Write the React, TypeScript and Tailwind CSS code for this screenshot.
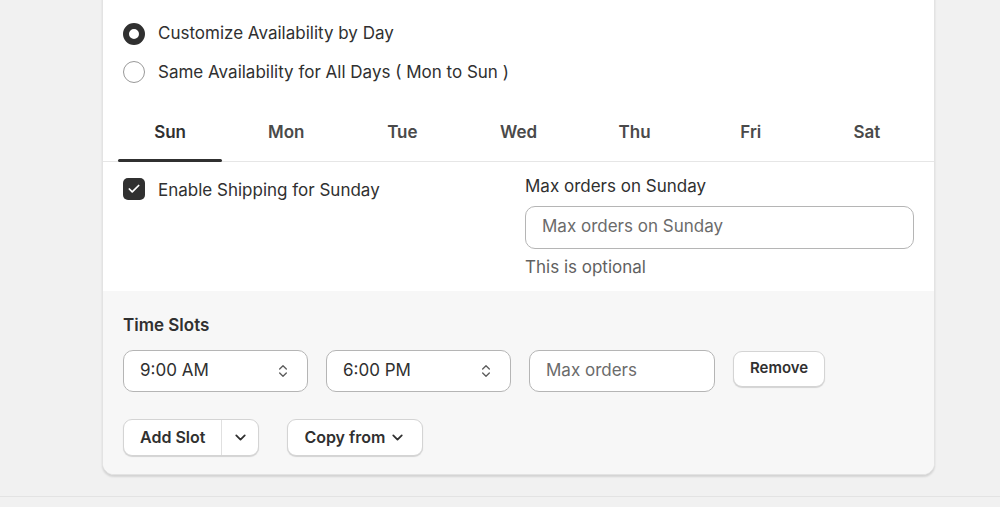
import { ChevronDown, ChevronsUpDown, Check } from "lucide-react";

const days = ["Sun", "Mon", "Tue", "Wed", "Thu", "Fri", "Sat"];

function Select({ value }: { value: string }) {
  return (
    <div className="flex items-center justify-between w-[185px] h-[42px] px-4 bg-white border border-[#b5b5b5] rounded-[10px]">
      <span>{value}</span>
      <ChevronsUpDown size={16} className="text-[#5c5c5c]" />
    </div>
  );
}

export default function App() {
  return (
    <div
      className="w-[1000px] h-[507px] bg-[#f1f1f1] overflow-hidden text-[17px] text-[#303030]"
      style={{ fontFamily: "Inter, 'Liberation Sans', sans-serif" }}
    >
      <div className="ml-[102px] w-[833px] -mt-[20px] bg-white rounded-b-[12px] border border-[#e3e3e3] shadow-[0_2px_2px_rgba(0,0,0,0.12)] overflow-hidden">
        <div className="px-5 pt-[40px] flex flex-col gap-[13px]">
          <label className="flex items-center gap-[13px]">
            <span className="w-[22px] h-[22px] rounded-full border-[6px] border-[#303030]" />
            Customize Availability by Day
          </label>
          <label className="flex items-center gap-[13px]">
            <span className="w-[22px] h-[22px] rounded-full border border-[#999]" />
            Same Availability for All Days ( Mon to Sun )
          </label>
        </div>
        <div className="mt-[20px] border-b border-[#e6e6e6] px-[9px] grid grid-cols-7">
          {days.map((d, i) => (
            <div key={d} className="h-[56px] flex flex-col items-center justify-center relative font-semibold text-[#4a4a4a]">
              <span className={i === 0 ? "text-[#303030]" : ""}>{d}</span>
              {i === 0 && <span className="absolute bottom-[-1px] left-[6px] right-[6px] h-[3px] rounded-full bg-[#303030]" />}
            </div>
          ))}
        </div>
        <div className="flex px-5 pt-[12px] pb-[11px]">
          <label className="flex items-start gap-[13px] w-[405px] pt-[4px]">
            <span className="w-[22px] h-[22px] rounded-[5px] bg-[#303030] flex items-center justify-center">
              <Check size={14} strokeWidth={3} className="text-white" />
            </span>
            Enable Shipping for Sunday
          </label>
          <div className="flex flex-col">
            <span>Max orders on Sunday</span>
            <div className="mt-[6px] w-[389px] h-[43px] border border-[#b5b5b5] rounded-[10px] flex items-center px-4 text-[#6b6b6b]">
              Max orders on Sunday
            </div>
            <span className="mt-[6px] text-[#616161]">This is optional</span>
          </div>
        </div>
        <div className="bg-[#f7f7f7] px-5 pt-[22px] pb-[18px]">
          <div className="font-semibold">Time Slots</div>
          <div className="mt-[11px] flex items-center gap-[18px]">
            <Select value="9:00 AM" />
            <Select value="6:00 PM" />
            <div className="w-[186px] h-[42px] bg-white border border-[#b5b5b5] rounded-[10px] flex items-center px-4 text-[#6b6b6b]">
              Max orders
            </div>
            <button className="h-[36px] px-4 bg-white rounded-[9px] border border-[#d4d4d4] shadow-[0_1px_1px_rgba(0,0,0,0.15)] font-semibold text-[15px] -mt-[4px]">
              Remove
            </button>
          </div>
          <div className="mt-[27px] flex items-center gap-[28px]">
            <div className="flex h-[37px] bg-white rounded-[9px] border border-[#d4d4d4] shadow-[0_1px_1px_rgba(0,0,0,0.15)] font-semibold text-[16px]">
              <span className="px-4 flex items-center border-r border-[#e0e0e0]">Add Slot</span>
              <span className="w-[36px] flex items-center justify-center"><ChevronDown size={17} strokeWidth={2.5} /></span>
            </div>
            <div className="flex items-center gap-1 h-[37px] px-4 bg-white rounded-[9px] border border-[#d4d4d4] shadow-[0_1px_1px_rgba(0,0,0,0.15)] font-semibold text-[16px]">
              Copy from <ChevronDown size={17} strokeWidth={2.5} />
            </div>
          </div>
        </div>
      </div>
      <div className="mt-[21px] border-t border-[#e3e3e3]" />
    </div>
  );
}
